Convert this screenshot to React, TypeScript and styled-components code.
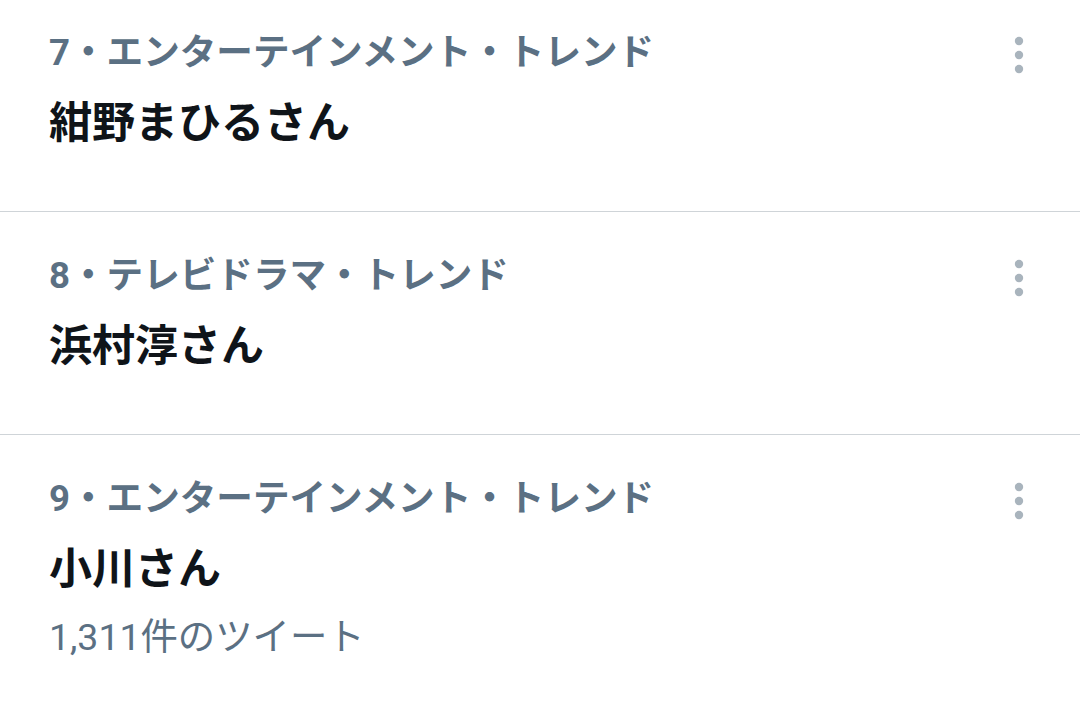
import React from "react";
import styled, { createGlobalStyle } from "styled-components";

const Global = createGlobalStyle`
  html, body { margin: 0; padding: 0; background: #ffffff; }
  body { font-family: Roboto, "Noto Sans CJK JP", sans-serif; overflow: hidden; }
`;

const Viewport = styled.div`
  width: 1080px;
  height: 707px;
  overflow: hidden;
  background: #ffffff;
`;

const List = styled.div`
  margin-top: -11px;
  display: flex;
  flex-direction: column;
`;

const Row = styled.div`
  display: flex;
  justify-content: space-between;
  align-items: flex-start;
  padding: 41px 53px 60px 49px;
  border-bottom: 1px solid #cfd4d8;
`;

const Content = styled.div`
  display: flex;
  flex-direction: column;
`;

const Category = styled.div`
  font-family: Roboto, "Noto Sans CJK JP", sans-serif;
  font-size: 36.6px;
  line-height: 46px;
  font-weight: 700;
  color: #5b7083;
  white-space: nowrap;
`;

const Title = styled.div`
  margin-top: 19px;
  font-family: Roboto, "Noto Sans CJK JP", sans-serif;
  font-size: 43px;
  line-height: 56px;
  font-weight: 700;
  color: #0f1419;
  white-space: nowrap;
`;

const Count = styled.div`
  margin-top: 17px;
  font-family: Roboto, "Noto Sans CJK JP", sans-serif;
  font-size: 37.4px;
  line-height: 46px;
  font-weight: 400;
  color: #5b7083;
  white-space: nowrap;
`;

const MoreButton = styled.button`
  border: none;
  background: transparent;
  padding: 0;
  margin-top: 5px;
  width: 16px;
  height: 40px;
  display: flex;
  align-items: center;
  justify-content: center;
  cursor: pointer;
`;

const MoreIcon = () => (
  <svg width="16" height="40" viewBox="0 0 16 40">
    <circle cx="8" cy="6" r="4.2" fill="#a9b4bd" />
    <circle cx="8" cy="20" r="4.2" fill="#a9b4bd" />
    <circle cx="8" cy="34" r="4.2" fill="#a9b4bd" />
  </svg>
);

type Trend = { rank: number; category: string; title: string; count?: string };

const trends: Trend[] = [
  { rank: 7, category: "エンターテインメント", title: "紺野まひるさん" },
  { rank: 8, category: "テレビドラマ", title: "浜村淳さん" },
  { rank: 9, category: "エンターテインメント", title: "小川さん", count: "1,311件のツイート" },
];

export default function App() {
  return (
    <Viewport>
      <Global />
      <List>
        {trends.map((t) => (
          <Row key={t.rank}>
            <Content>
              <Category>{`${t.rank}・${t.category}・トレンド`}</Category>
              <Title>{t.title}</Title>
              {t.count && <Count>{t.count}</Count>}
            </Content>
            <MoreButton aria-label="More">
              <MoreIcon />
            </MoreButton>
          </Row>
        ))}
      </List>
    </Viewport>
  );
}
